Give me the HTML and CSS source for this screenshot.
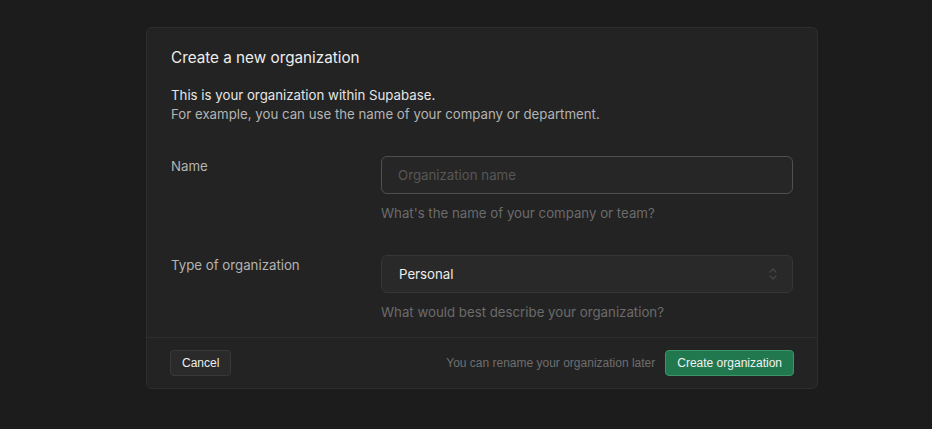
FILE: index.html
```html
<!DOCTYPE html>
<html>
<head>
<meta charset="utf-8">
<link rel="stylesheet" href="styles.css">
</head>
<body>
<div class="page">
  <div class="card">
    <div class="body">
      <h1 class="title">Create a new organization</h1>
      <div class="desc">
        <p class="desc-main">This is your organization within Supabase.</p>
        <p class="desc-sub">For example, you can use the name of your company or department.</p>
      </div>
      <div class="row">
        <div class="label">Name</div>
        <div class="field">
          <div class="input"><span class="placeholder">Organization name</span></div>
          <div class="help">What's the name of your company or team?</div>
        </div>
      </div>
      <div class="row">
        <div class="label">Type of organization</div>
        <div class="field">
          <div class="select">
            <span class="value">Personal</span>
            <svg class="chev" width="10" height="16" viewBox="0 0 10 16" fill="none" stroke="#454545" stroke-width="1.3" stroke-linecap="round" stroke-linejoin="round"><path d="M2 6 5 3 8 6"/><path d="M2 10 5 13 8 10"/></svg>
          </div>
          <div class="help">What would best describe your organization?</div>
        </div>
      </div>
    </div>
    <div class="footer">
      <button class="btn btn-cancel">Cancel</button>
      <div class="footer-right">
        <span class="note">You can rename your organization later</span>
        <button class="btn btn-primary">Create organization</button>
      </div>
    </div>
  </div>
</div>
</body>
</html>
```
FILE: styles.css
```css
* { box-sizing: border-box; }
html, body { margin: 0; padding: 0; }
body {
  background: #1c1c1c;
  font-family: Inter, "Noto Sans", sans-serif;
  width: 932px;
  height: 429px;
  overflow: hidden;
}
.page {
  padding-top: 27px;
  padding-left: 146px;
}
.card {
  width: 672px;
  background: #232323;
  border: 1px solid #2e2e2e;
  border-radius: 6px;
}
.body {
  padding: 20px 24px 15px 24px;
}
.title {
  margin: 0;
  font-size: 15.25px;
  line-height: 20px;
  font-weight: 400;
  color: #ededed;
}
.desc { margin-top: 18px; }
.desc p {
  margin: 0;
  font-size: 13.25px;
  line-height: 19px;
}
.desc-main { color: #e6e6e6; }
.desc-sub { color: #b4b4b4; }
.row {
  display: grid;
  grid-template-columns: 210px 1fr;
  margin-top: 32px;
}
.label {
  font-size: 13.25px;
  line-height: 20px;
  color: #b4b4b4;
}
.input, .select {
  height: 38px;
  border-radius: 6px;
  display: flex;
  align-items: center;
  padding: 0 16px;
  font-size: 13.25px;
}
.input {
  background: #262626;
  border: 1px solid #505050;
}
.placeholder { color: #575757; }
.select {
  background: #292929;
  border: 1px solid #363636;
  justify-content: space-between;
  padding-right: 14px;
  padding-left: 17px;
}
.value { color: #ededed; }
.help {
  margin-top: 9px;
  font-size: 13.25px;
  line-height: 20px;
  color: #6b6b6b;
}
.footer {
  border-top: 1px solid #2e2e2e;
  padding: 12px 23px;
  display: flex;
  align-items: center;
  justify-content: space-between;
}
.footer-right {
  display: flex;
  align-items: center;
  gap: 10px;
}
.note {
  font-family: "Liberation Sans", Arial, sans-serif;
  font-size: 12px;
  color: #6e6e6e;
}
.btn {
  font-family: "Liberation Sans", Arial, sans-serif;
  font-size: 12px;
  height: 26px;
  border-radius: 4px;
  padding: 0 11px;
  cursor: pointer;
}
.btn-cancel {
  background: #2a2a2a;
  border: 1px solid #393939;
  color: #ededed;
}
.btn-primary {
  background: #21784f;
  border: 1px solid #3a9669;
  color: #f2f2f2;
}
```
